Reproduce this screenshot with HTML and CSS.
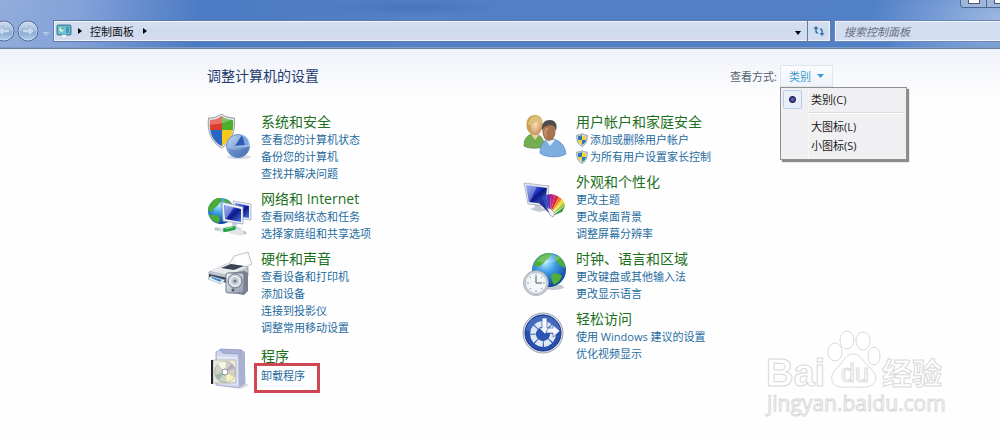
FILE: index.html
```html
<!DOCTYPE html>
<html lang="zh-CN">
<head>
    <meta charset="UTF-8">
    <meta name="viewport" content="width=device-width, initial-scale=1.0">
    <title>控制面板</title>
    <link rel="stylesheet" href="styles.css">
</head>
<body>
    <!-- shared gradients and the small shield -->
    <svg class="defs" width="0" height="0" aria-hidden="true">
        <defs>
            <radialGradient id="globe" cx="40%" cy="28%" r="75%">
                <stop offset="0" stop-color="#b5ecff"/><stop offset=".4" stop-color="#3d9be4"/><stop offset="1" stop-color="#0b3c94"/>
            </radialGradient>
            <linearGradient id="screen" x1="0" y1="0" x2="1" y2="1">
                <stop offset="0" stop-color="#7392ef"/><stop offset=".45" stop-color="#1b32bb"/><stop offset=".55" stop-color="#0b1785"/><stop offset="1" stop-color="#4c76df"/>
            </linearGradient>
            <linearGradient id="silver" x1="0" y1="0" x2="1" y2="1">
                <stop offset="0" stop-color="#fafbfd"/><stop offset="1" stop-color="#8b95a8"/>
            </linearGradient>
            <radialGradient id="skin" cx="40%" cy="30%" r="80%">
                <stop offset="0" stop-color="#fbe0b9"/><stop offset="1" stop-color="#c48c57"/>
            </radialGradient>
            <linearGradient id="pie" x1="0" y1="0" x2="1" y2="1">
                <stop offset="0" stop-color="#c5daf5"/><stop offset="1" stop-color="#4c77bd"/>
            </linearGradient>
            <linearGradient id="glass" x1="0" y1="0" x2="0" y2="1">
                <stop offset="0" stop-color="#d3dff0"/><stop offset=".5" stop-color="#a5bddf"/><stop offset=".52" stop-color="#86a5d2"/><stop offset="1" stop-color="#b5d0ee"/>
            </linearGradient>
            <clipPath id="shield-clip"><path d="M15.500 5c4 3 8 4 11.500 4c1 12-2 21-11.500 26C6 30 3 21 4 9c4 0 8-1 11.500-4z"/></clipPath>
        </defs>
        <symbol id="uac" viewBox="0 0 12 14">
            <path d="M6 .6c2 1.300 3.600 1.500 5.200 1.500C11.500 7.500 10 11.500 6 13.400C2 11.500.5 7.500.8 2.100C2.400 2.100 4 1.900 6 .6z" fill="#dfe5e9" stroke="#70859a" stroke-width=".8"/>
            <path d="M6 2v5H2V3.200C3.500 3.100 4.800 2.700 6 2z" fill="#2d78bd"/>
            <path d="M6 2v5h4V3.200C8.500 3.100 7.200 2.700 6 2z" fill="#f4d33c"/>
            <path d="M6 12V7H2c.4 2.200 1.700 4 4 5z" fill="#f4d33c"/>
            <path d="M6 12V7h4c-.4 2.200-1.700 4-4 5z" fill="#2d78bd"/>
        </symbol>
    </svg>

    <header class="frame">
        <div class="window-buttons">
            <button type="button" aria-label="最小化"><span class="min-mark"></span></button>
            <button type="button" aria-label="最大化"><span class="max-mark"></span></button>
        </div>
        <div class="nav-bar">
            <div class="history">
                <button type="button" class="round" aria-label="后退">
                    <svg width="22" height="22" viewBox="0 0 22 22"><circle cx="11" cy="11" r="10" fill="url(#glass)" stroke="#4b6489"/><circle cx="11" cy="11" r="9" fill="none" stroke="#d2e1f3" stroke-opacity=".7"/><path d="M4.500 11l6-5v3.200h6v3.600h-6V16z" fill="#cbdaee" stroke="#8caad0" stroke-width=".7"/></svg>
                </button>
                <button type="button" class="round" aria-label="前进">
                    <svg width="22" height="22" viewBox="0 0 22 22"><circle cx="11" cy="11" r="10" fill="url(#glass)" stroke="#4b6489"/><circle cx="11" cy="11" r="9" fill="none" stroke="#d2e1f3" stroke-opacity=".7"/><path d="M17.500 11l-6-5v3.200h-6v3.600h6V16z" fill="#cbdaee" stroke="#8caad0" stroke-width=".7"/></svg>
                </button>
                <button type="button" class="recent" aria-label="最近的页面">
                    <svg width="6" height="4" viewBox="0 0 6 4"><path d="M.5.5h5L3 3.500z" fill="#8fb0de" stroke="#dbe7f7" stroke-width=".6"/></svg>
                </button>
            </div>
            <nav class="address">
                <svg class="panel-icon" width="16" height="15" viewBox="0 0 16 15">
                    <rect x="1" y="1" width="14" height="10" rx="1" fill="#3f9bbd" stroke="#4d7f99"/>
                    <rect x="2" y="2" width="12" height="8" fill="#6fc0d6"/>
                    <circle cx="5.500" cy="5.500" r="2.300" fill="#d9f3e7"/><path d="M5.500 5.500V3.200a2.300 2.300 0 0 1 2.300 2.300z" fill="#3c9a54"/>
                    <path d="M10 4h3M10 6h3M10 8h3" stroke="#1d6c97"/>
                    <ellipse cx="8" cy="12.500" rx="3" ry="2" fill="#eef2f5" stroke="#a7b5bf" stroke-width=".5"/>
                </svg>
                <svg class="crumb-arrow" width="4" height="6" viewBox="0 0 4 6"><path d="M0 0l4 3-4 3z"/></svg>
                <a href="#">控制面板</a>
                <svg class="crumb-arrow" width="4" height="6" viewBox="0 0 4 6"><path d="M0 0l4 3-4 3z"/></svg>
                <button type="button" class="address-drop" aria-label="以前的位置">
                    <svg width="6" height="4" viewBox="0 0 6 4"><path d="M0 0h6L3 4z"/></svg>
                </button>
                <button type="button" class="refresh" aria-label="刷新">
                    <svg width="12" height="12" viewBox="0 0 12 12" fill="none" stroke="#2f77ab" stroke-width="1.500"><path d="M3 2v4c0 1 .5 2 2 2"/><path d="M.7 4L3 1.200L5.300 4" fill="#2f77ab" stroke-width=".5"/><path d="M9 10V6c0-1-.5-2-2-2"/><path d="M6.700 8L9 10.800L11.300 8" fill="#2f77ab" stroke-width=".5"/></svg>
                </button>
            </nav>
            <input class="search" type="search" placeholder="搜索控制面板" aria-label="搜索控制面板">
        </div>
    </header>

    <main>
        <div class="title-row">
            <h1>调整计算机的设置</h1>
            <div class="view-by">
                <span id="view-label">查看方式:</span>
                <div class="view-picker">
                    <button type="button" class="view-button" aria-haspopup="true" aria-expanded="true" aria-describedby="view-label">
                        类别
                        <svg width="7" height="4" viewBox="0 0 7 4"><path d="M0 0h7L3.500 4z" fill="#3a9bd0"/></svg>
                    </button>
                    <div class="view-menu">
                        <label><input type="radio" name="view" checked><span>类别(C)</span></label>
                        <hr>
                        <label><input type="radio" name="view"><span>大图标(L)</span></label>
                        <label><input type="radio" name="view"><span>小图标(S)</span></label>
                    </div>
                </div>
            </div>
        </div>

        <div class="categories">
            <div class="column">
                <section class="category">
                    <svg class="icon" viewBox="0 0 48 48">
                        <ellipse cx="33" cy="46" rx="12" ry="2" fill="#d8dbe2"/>
                        <path d="M15.500 3c4 3 8 4 13 4c1 13-3 24-13 30C5 31 1 20 2.500 7c5 0 9-1 13-4z" fill="#e3e4e5" stroke="#9a9da0"/>
                        <g clip-path="url(#shield-clip)">
                            <path d="M2 3h14v16H2z" fill="#dc3b2b"/><path d="M16 3h14v16H16z" fill="#4fae2c"/>
                            <path d="M2 19h14v18H2z" fill="#2866c4"/><path d="M16 19h14v18H16z" fill="#f5c91c"/>
                            <path d="M2 4h27c-4 7-13 9-26 10z" fill="#fff" opacity=".28"/>
                        </g>
                        <circle cx="32" cy="35" r="11.500" fill="url(#pie)" stroke="#6a8fc6"/>
                        <path d="M22 37c6 3 14 2 21-2c0 14-18 16-21 2z" fill="#3e68ae" opacity=".45"/>
                        <path d="M30 35l7-11c5 2 7 7 6 11z" fill="#7ea7e2" stroke="#dceafa" stroke-width=".8"/>
                        <path d="M29 35l7-11 3 10z" fill="#2e5cb0"/>
                    </svg>
                    <div class="tasks">
                        <h2><a href="#">系统和安全</a></h2>
                        <a href="#">查看您的计算机状态</a>
                        <a href="#">备份您的计算机</a>
                        <a href="#">查找并解决问题</a>
                    </div>
                </section>
                <section class="category">
                    <svg class="icon" viewBox="0 0 48 48">
                        <circle cx="15" cy="23" r="13" fill="url(#globe)"/>
                        <path d="M5 15c3-5 8-6 11-4c1 3-3 3-4 6c-2 3-5 2-5 6c-2 1-4 0-5-1c0-3 1-5 3-7zM6 27c4-1 7 1 8 4c0 2-1 3-2 4c-4-1-8-4-9-8zM18 11c4 0 6 2 7 4l-5 2z" fill="#48ab3a"/>
                        <path d="M27 13l18 3v16l-14-2z" fill="#e9edf4" stroke="#9aa5b8" stroke-width=".7"/>
                        <path d="M29 15l14 3v12l-12-2z" fill="url(#screen)"/>
                        <path d="M26 34l5 1v4l6 2-9 1-6-3 4-1z" fill="#c9d0db"/>
                        <path d="M16 14l21 5v17l-20-3z" fill="#eef1f6" stroke="#8e9bb2" stroke-width=".7"/>
                        <path d="M18 17l17 4v13l-16-3z" fill="url(#screen)"/>
                        <path d="M19 17l9 2-8 12-1-1z" fill="#fff" opacity=".35"/>
                        <path d="M10 41l12 1M33 43l6 2" stroke="#bdc5ca" stroke-width="3" stroke-linecap="round"/>
                        <path d="M16 42l12-2M25 43l10 2" stroke="#dfe6e3" stroke-width="5" stroke-linecap="round"/>
                        <path d="M19 42l9-2" stroke="#23a345" stroke-width="4" stroke-linecap="round"/>
                        <path d="M20 40.500l7-1.500" stroke="#a2e7a8" stroke-width="1"/>
                    </svg>
                    <div class="tasks">
                        <h2><a href="#">网络和 Internet</a></h2>
                        <a href="#">查看网络状态和任务</a>
                        <a href="#">选择家庭组和共享选项</a>
                    </div>
                </section>
                <section class="category">
                    <svg class="icon" viewBox="0 0 48 48">
                        <path d="M22 18l6-10 14-4 4 12-10 5z" fill="#f5f6f8" stroke="#b2b7bf" stroke-width=".8"/>
                        <path d="M28 9l12-3 3 9-11 4z" fill="#fff"/>
                        <path d="M3 24l18-8 21 3v9l-20 7-19-5z" fill="#bfc5ce" stroke="#8c939e" stroke-width=".7"/>
                        <path d="M4 23l17-7 20 3-17 8z" fill="#e9ebef"/>
                        <path d="M15 20l10-4 13 2-10 4z" fill="#3c4351"/>
                        <path d="M3 26l19 4v5L3 30z" fill="#38445a"/>
                        <path d="M5 28l14 4-4 4-13-5z" fill="#f2f6fb" stroke="#8ba0b8" stroke-width=".6"/>
                        <path d="M6 29l10 3-2 2-9-4z" fill="#3a8fd8"/>
                        <path d="M21 25l18-2 3 2v18l-4 4-17-3z" fill="#78828f"/>
                        <rect x="20" y="25" width="18" height="20" rx="2" fill="url(#silver)" stroke="#727c8b"/>
                        <circle cx="29" cy="33" r="7" fill="#d8dde3" stroke="#68717d"/>
                        <circle cx="29" cy="33" r="4.500" fill="#c3c9d1" stroke="#f3f5f7"/>
                        <circle cx="29" cy="33" r="1.500" fill="#6b7480"/>
                        <circle cx="27" cy="42" r="1.500" fill="#515b69"/>
                    </svg>
                    <div class="tasks">
                        <h2><a href="#">硬件和声音</a></h2>
                        <a href="#">查看设备和打印机</a>
                        <a href="#">添加设备</a>
                        <a href="#">连接到投影仪</a>
                        <a href="#">调整常用移动设置</a>
                    </div>
                </section>
                <section class="category programs">
                    <svg class="icon" viewBox="0 0 48 48">
                        <path d="M32 41l7-3 4 2-8 4z" fill="#d5d8de"/>
                        <path d="M14 4l22 1-1 8-21 1z" fill="#a8b0da" stroke="#828bb8" stroke-width=".7"/>
                        <path d="M10 7l4-2 3 3 17 1 4-3 1 32-6 5-23-3z" fill="#cfd4ee" stroke="#8b93b7" stroke-width=".7"/>
                        <path d="M32 10l7-3v31l-6 4z" fill="#aab0d0"/>
                        <path d="M11 11l21 1v28l-21-1z" fill="#e3e6f4"/>
                        <rect x="7" y="15" width="23" height="23" fill="#e8eadf" fill-opacity=".9" stroke="#a5a9a0" stroke-width=".7"/>
                        <path d="M6 15v24" stroke="#25272d" stroke-width="2"/>
                        <circle cx="19" cy="27" r="10.500" fill="#ced1c3" stroke="#999d94" stroke-width=".6"/>
                        <path d="M19 27L12 19a10 10 0 0 1 8-2z" fill="#f8f8dc"/><path d="M19 27l9 5a10 10 0 0 1-7 5z" fill="#f6f3ba"/>
                        <path d="M19 27l-10 3a10 10 0 0 0 4 5z" fill="#9db9ac"/><path d="M19 27l10-4a10 10 0 0 0-4-4z" fill="#b8a9bf"/>
                        <circle cx="19" cy="27" r="3" fill="#fff" stroke="#8d9298"/>
                    </svg>
                    <div class="tasks">
                        <h2><a href="#">程序</a></h2>
                        <a href="#" class="marked">卸载程序</a>
                    </div>
                </section>
            </div>

            <div class="column">
                <section class="category">
                    <svg class="icon" viewBox="0 0 48 48">
                        <path d="M3 35c0-8 4-12 10-12s10 4 10 12c-4 3-15 3-20 0z" fill="#73ae4f" stroke="#477c2e" stroke-width=".6"/>
                        <path d="M10 23l4 6 4-5z" fill="#efd0a5"/>
                        <path d="M6 18c-2-9 2-14 8-14s9 5 7 14c-1 3-4 6-7 6s-6-2-8-6z" fill="#c9a052"/>
                        <ellipse cx="15" cy="16" rx="5.500" ry="8" fill="url(#skin)"/>
                        <path d="M7 14c4 0 8-2 9-5c1 2 3 3 5 4C22 3 9 1 7 14z" fill="#dcc078"/>
                        <path d="M19 42c0-9 4-14 11-14s14 5 15 15c-6 4-21 4-26-1z" fill="#7caee0" stroke="#4d7eb5" stroke-width=".6"/>
                        <path d="M25 29l4 6 5-6z" fill="#eaf3fb"/>
                        <ellipse cx="28" cy="21" rx="6.500" ry="9" fill="#a87450"/>
                        <path d="M21 20c-1-8 3-11 8-11s8 4 6 11c-1-4-3-6-5-6c-4 1-7 0-9 6z" fill="#4f4a4c"/>
                        <path d="M23 21c0-4 3-5 5-4c-3 3-2 6-2 10c-2-1-3-4-3-6z" fill="#c08e6b"/>
                    </svg>
                    <div class="tasks">
                        <h2><a href="#">用户帐户和家庭安全</a></h2>
                        <a href="#" class="admin"><svg width="12" height="14"><use href="#uac"/></svg>添加或删除用户帐户</a>
                        <a href="#" class="admin"><svg width="12" height="14"><use href="#uac"/></svg>为所有用户设置家长控制</a>
                    </div>
                </section>
                <section class="category">
                    <svg class="icon" viewBox="0 0 48 48">
                        <path d="M13 32l7 1 1 4 6 2-9 2-9-3 5-2z" fill="#c3cad6"/>
                        <path d="M3 12l25 3-2 20-19-2z" fill="#e6eaf1" stroke="#97a2b5" stroke-width=".7"/>
                        <path d="M5 14l21 3-2 16-16-2z" fill="url(#screen)"/>
                        <path d="M5 14l11 1-7 16h-1z" fill="#fff" opacity=".3"/>
                        <path d="M29 43L18 32l3-5z" fill="#242e92"/><path d="M29 43L21 27l4-3z" fill="#254fc2"/>
                        <path d="M29 43L25 24l5-1z" fill="#6d2aa9"/><path d="M29 43l1-20 4 1z" fill="#bd2391"/>
                        <path d="M29 43l5-19 4 2z" fill="#dc2b37"/><path d="M29 43l9-17 3 2z" fill="#ef872a"/>
                        <path d="M29 43l12-15 2 3z" fill="#f4d63b"/><path d="M30 44l13-13 1 4z" fill="#9ecb3c"/><path d="M31 45l13-10-3 6z" fill="#39973f"/>
                        <path d="M26 37l4 1 4 4-2 4-3-2z" fill="#f3f3f5" stroke="#7f8290" stroke-width=".6"/>
                    </svg>
                    <div class="tasks">
                        <h2><a href="#">外观和个性化</a></h2>
                        <a href="#">更改主题</a>
                        <a href="#">更改桌面背景</a>
                        <a href="#">调整屏幕分辨率</a>
                    </div>
                </section>
                <section class="category">
                    <svg class="icon" viewBox="0 0 48 48">
                        <ellipse cx="32" cy="39" rx="11" ry="3" fill="#c5c9d0"/>
                        <circle cx="28" cy="22" r="17" fill="url(#globe)"/>
                        <path d="M16 11c4-5 10-7 15-5c0 3-3 2-4 5c-3 1-3 4-6 5c-1 3-5 2-8 3c0-3 1-6 3-8zM36 7c5 3 8 8 8 13c-3-1-4-3-6-3c-1-3-3-4-4-6zM31 26c4-2 8 0 10 2c-1 4-4 7-8 9c-2-4-4-7-2-11z" fill="#4fae37"/>
                        <path d="M16 13c5-8 16-9 23-3c-5 5-13 7-23 3z" fill="#fff" opacity=".22"/>
                        <circle cx="15" cy="35" r="12.500" fill="#cdd2d8" stroke="#8c959f" stroke-width=".7"/>
                        <circle cx="15" cy="35" r="10.500" fill="#f2f6f9" stroke="#a7b0b9" stroke-width=".6"/>
                        <path d="M15 26v2M15 42v2M6 35h2M22 35h2M8.500 28.500l1.500 1.500M21.500 28.500L20 30M8.500 41.500L10 40M21.500 41.500L20 40" stroke="#7b8793" stroke-width=".8"/>
                        <path d="M15 28v7h6" fill="none" stroke="#4a5463" stroke-width="1"/>
                    </svg>
                    <div class="tasks">
                        <h2><a href="#">时钟、语言和区域</a></h2>
                        <a href="#">更改键盘或其他输入法</a>
                        <a href="#">更改显示语言</a>
                    </div>
                </section>
                <section class="category">
                    <svg class="icon" viewBox="0 0 48 48">
                        <circle cx="22" cy="25" r="20" fill="#dce1eb" stroke="#8791a8" stroke-width=".8"/>
                        <circle cx="22" cy="25" r="18" fill="#274fae" stroke="#1a3680"/>
                        <path d="M5 22c2-18 30-19 34-1c-10 4-22 5-34 1z" fill="#7395dd" opacity=".4"/>
                        <circle cx="22" cy="26" r="10" fill="none" stroke="#dfe6f4" stroke-width="6" stroke-dasharray="6.854 1" transform="rotate(-90 22 26)"/>
                        <circle cx="22" cy="26" r="6.500" fill="#2b55b2"/>
                        <path d="M21 10h5v10h3l-5 6-6-6h3z" fill="#f5f7fc" stroke="#2b50a3" stroke-width=".6"/>
                        <path d="M27 20h5v-3l7 6-7 6v-4h-7z" fill="#f5f7fc" stroke="#2b50a3" stroke-width=".6"/>
                    </svg>
                    <div class="tasks">
                        <h2><a href="#">轻松访问</a></h2>
                        <a href="#">使用 Windows 建议的设置</a>
                        <a href="#">优化视频显示</a>
                    </div>
                </section>
            </div>
        </div>
    </main>

    <svg class="watermark" width="190" height="100" viewBox="0 0 190 100">
        <g fill="#fff" stroke="#d9d9d9">
            <text class="wm-brand" x="6" y="61">Bai</text>
            <ellipse cx="75" cy="27" rx="7" ry="9"/>
            <ellipse cx="87" cy="15" rx="7" ry="9"/>
            <ellipse cx="103" cy="16" rx="7" ry="9"/>
            <ellipse cx="114" cy="31" rx="6" ry="9"/>
            <path d="M93 29c-8 0-9 8-15 13c-6 5-8 11-5 16c4 6 12 4 20 4s16 2 21-4c4-5 1-11-5-16c-6-5-8-13-16-13z"/>
            <text class="wm-du" x="81" y="57">du</text>
            <text class="wm-cn" x="122" y="59">经验</text>
            <text class="wm-url" x="7" y="86">jingyan.baidu.com</text>
        </g>
    </svg>
</body>
</html>
```

FILE: styles.css
```css
body {
    font-family: "Open Sans", "Noto Sans CJK SC", sans-serif;
    font-size: 11px;
    line-height: 17px;
    margin: 0;
    min-height: 100vh;
    overflow: hidden;
    position: relative;
    background: #fefefe;
    color: #1e1e1e;
}

a {
    color: #1f6c9f;
    text-decoration: none;
}

a:hover {
    text-decoration: underline;
}

button,
input {
    font: inherit;
    margin: 0;
}

button {
    padding: 0;
    border: none;
    background: none;
    cursor: pointer;
}

.defs {
    position: absolute;
}

/* window frame */
.frame {
    position: relative;
    padding: 20px 0 6px;
    border-bottom: 1px solid #66809f;
    box-shadow: inset 0 -1px #7f9cc6;
    background:
        radial-gradient(ellipse 130px 60px at 100% 40%, rgba(190, 207, 236, 0.7), transparent),
        radial-gradient(ellipse 90px 9px at 415px 7px, rgba(60, 105, 175, 0.5), transparent),
        linear-gradient(100deg, #92acdc 0, #84a2d8 80px, #6b90d0 130px, #4b7bc4 200px, #5380c6 400px, #5080c8 100%);
}

.window-buttons {
    position: absolute;
    top: 0;
    right: -14px;
    display: flex;
    height: 7px;
    border: 1px solid #4e6791;
    border-top: none;
    border-radius: 0 0 4px 4px;
    overflow: hidden;
}

.window-buttons button {
    width: 26px;
    height: 7px;
    border-right: 1px solid #4e6791;
    background: #9eb5dc;
    display: flex;
    justify-content: center;
}

.min-mark,
.max-mark {
    width: 10px;
    height: 3px;
    border: 1px solid #4b5a75;
    border-top: none;
    background: #fff;
}

.nav-bar {
    display: flex;
    align-items: center;
    height: 22px;
    margin-right: -6px;
}

.history {
    display: flex;
    align-items: center;
    margin-left: -7px;
    width: 60px;
}

.round {
    width: 22px;
    height: 22px;
    margin-right: 2px;
}

.round svg {
    display: block;
}

.recent {
    line-height: 1;
    margin-left: 2px;
}

.address {
    flex: 1;
    display: flex;
    align-items: center;
    height: 20px;
    border: 1px solid #5f7ba8;
    box-shadow: inset 0 0 0 1px #eff4fb;
    background: linear-gradient(#d6dff1, #cedcf0 50%, #d7dcee);
}

.address a {
    color: #111;
}

.panel-icon {
    margin: 0 6px 0 2px;
}

.crumb-arrow {
    margin-right: 8px;
}

.address a + .crumb-arrow {
    margin-left: 9px;
}

.address-drop {
    margin-left: auto;
    width: 18px;
    line-height: 10px;
}

.refresh {
    width: 23px;
    height: 20px;
    line-height: 10px;
    border-left: 1px solid #5f7ba8;
}

.search {
    width: 172px;
    height: 22px;
    box-sizing: border-box;
    margin-left: 3px;
    padding: 0 9px;
    border: 1px solid #6b87b5;
    border-radius: 0;
    box-shadow: inset 0 0 0 1px #eff4fb;
    background: linear-gradient(#d2def2, #d3dcf0);
    font-style: italic;
}

.search::placeholder {
    color: #666f80;
    opacity: 1;
}

/* content */
main {
    padding: 15px 0 30px 207px;
    background: linear-gradient(#eff2f9, #fefefe 50px);
}

.title-row {
    display: flex;
    justify-content: space-between;
    align-items: center;
    height: 24px;
    padding-right: 167px;
}

h1 {
    margin: 0;
    font-size: 14px;
    font-weight: normal;
    line-height: 18px;
    color: #1d3c70;
}

.view-by {
    display: flex;
    align-items: center;
    gap: 3px;
    color: #51606f;
}

.view-picker {
    position: relative;
}

.view-button {
    display: flex;
    align-items: center;
    gap: 6px;
    height: 22px;
    width: 53px;
    box-sizing: border-box;
    padding-left: 8px;
    border: 1px solid #dfe6f0;
    background: linear-gradient(#fbfcfe, #eef3fa);
    color: #3a9bd0;
}

.view-menu {
    position: absolute;
    top: 22px;
    left: 0;
    width: 127px;
    box-sizing: border-box;
    padding: 2px 2px 4px;
    border: 1px solid #8f8f8f;
    background: linear-gradient(90deg, #f0eff1 26px, #dedee2 26px, #fff 27px, #f0eff1 28px);
    box-shadow: 2px 2px 1px #8c8c8c;
    color: #1a1a1a;
}

.view-menu label {
    display: flex;
    align-items: center;
    gap: 9px;
    height: 19px;
}

.view-menu input {
    appearance: none;
    width: 19px;
    height: 19px;
    border-radius: 2px;
}

.view-menu input:checked {
    border: 1px solid #b4cdea;
    background: radial-gradient(circle at 50% 50%, #7170bd 0, #24205f 3px, #e8eff9 4px);
}

.view-menu hr {
    margin: 3px 0 3px 25px;
    border: none;
    border-top: 1px solid #dcdcdf;
    border-bottom: 1px solid #fff;
}

.categories {
    display: flex;
    padding-top: 25px;
}

.column {
    width: 315px;
    display: flex;
    flex-direction: column;
    gap: 8px;
}

.category {
    display: flex;
    gap: 7px;
}

.programs {
    margin-top: 3px;
}

.icon {
    width: 48px;
    height: 48px;
    margin: -2px 0 -2px -1px;
    flex: none;
}

.tasks {
    display: flex;
    flex-direction: column;
    align-items: flex-start;
    white-space: nowrap;
}

h2 {
    margin: 0;
    font-size: 14px;
    font-weight: normal;
    line-height: 18px;
}

h2 a {
    color: #1c701c;
}

.admin {
    display: flex;
    align-items: center;
    gap: 2px;
}

.marked {
    position: relative;
    margin-top: 2px;
}

/* red frame round the uninstall link */
.marked::after {
    content: "";
    position: absolute;
    inset: -4px -15px -9px -7px;
    border: 3px solid #cf4753;
}

.watermark {
    position: absolute;
    right: 50px;
    bottom: 13px;
    overflow: visible;
    pointer-events: none;
}

.wm-brand {
    font: bold 38px "Liberation Sans", sans-serif;
}

.wm-du {
    font: 25px "Liberation Sans", sans-serif;
}

.wm-cn {
    font: bold 30px "Noto Sans CJK SC", sans-serif;
}

.wm-url {
    font: 21px "Open Sans", sans-serif;
}
```
